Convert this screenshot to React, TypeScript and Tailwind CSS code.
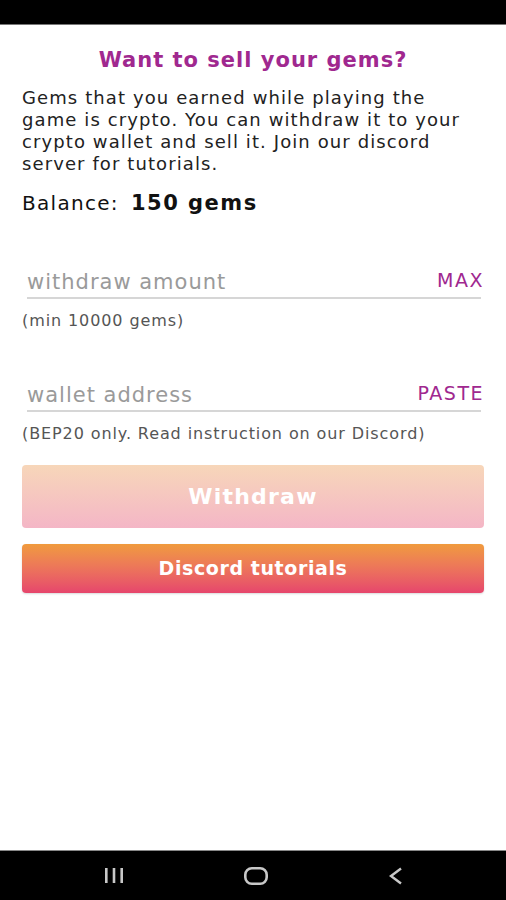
import React from 'react';

const Field = ({ placeholder, action, hint }: { placeholder: string; action: string; hint: string }) => (
    <div className="flex flex-col">
        <div className="ml-[5px] mr-[3px] flex items-center border-b-2 border-[#d6d6d6] pb-[2px]">
            <input
                className="min-w-0 flex-1 bg-transparent text-[21px] leading-[24px] tracking-[1px] text-[#222] placeholder-[#9a9a9a] outline-none"
                placeholder={placeholder}
            />
            <span className="-mr-[3px] mb-[4px] text-[19px] leading-[22px] tracking-[1.5px] text-[#a0288f]">{action}</span>
        </div>
        <p className="mt-[13px] text-[16px] leading-[18px] tracking-[0.9px] text-[#555]">{hint}</p>
    </div>
);

export default function App() {
    return (
        <div className="flex h-[900px] w-[506px] flex-col bg-white font-['DejaVu_Sans',sans-serif]">
            <div className="h-[25px] bg-black border-b border-[#777]" />

            <main className="flex flex-1 flex-col px-[22px]">
                <h1 className="mt-[21px] text-center text-[21px] font-bold leading-[28px] tracking-[1px] text-[#a0288f]">
                    Want to sell your gems?
                </h1>
                <p className="mt-[13px] w-[452px] text-[18px] leading-[22px] tracking-[1.1px] text-[#222]">
                    Gems that you earned while playing the game is crypto. You can withdraw it to your crypto wallet and sell it. Join our discord server for tutorials.
                </p>
                <div className="mt-[13px] flex items-baseline gap-[12px] text-[#111]">
                    <span className="text-[20px] tracking-[1.3px]">Balance:</span>
                    <span className="text-[21px] font-bold tracking-[1.5px]">150 gems</span>
                </div>

                <div className="mt-[49px]">
                    <Field placeholder="withdraw amount" action="MAX" hint="(min 10000 gems)" />
                </div>
                <div className="mt-[52px]">
                    <Field placeholder="wallet address" action="PASTE" hint="(BEP20 only. Read instruction on our Discord)" />
                </div>

                <button className="mt-[22px] h-[63px] rounded-[4px] bg-gradient-to-b from-[#f7d6b9] to-[#f4b6c6] text-[22px] font-bold tracking-[1.2px] text-white">
                    Withdraw
                </button>
                <button className="mt-[16px] h-[49px] rounded-[4px] bg-gradient-to-b from-[#f09a3c] to-[#e6456c] text-[19px] font-bold tracking-[0.6px] text-white shadow-[0_1px_2px_rgba(0,0,0,0.15)]">
                    Discord tutorials
                </button>
            </main>

            <nav className="flex h-[50px] items-center justify-center gap-[120px] bg-black border-t border-[#888]">
                <svg width="20" height="17" viewBox="0 0 20 17" className="text-[#c8c8c8]">
                    <rect x="1" y="1" width="2.6" height="15" fill="currentColor" />
                    <rect x="8.7" y="1" width="2.6" height="15" fill="currentColor" />
                    <rect x="16.4" y="1" width="2.6" height="15" fill="currentColor" />
                </svg>
                <svg width="24" height="18" viewBox="0 0 24 18" className="text-[#c8c8c8]">
                    <rect x="1.3" y="1.3" width="21.4" height="15.4" rx="6.5" fill="none" stroke="currentColor" strokeWidth="2.6" />
                </svg>
                <svg width="15" height="18" viewBox="0 0 15 18" className="text-[#c8c8c8]">
                    <path d="M13 1.5 L3 9 L13 16.5" fill="none" stroke="currentColor" strokeWidth="2.4" />
                </svg>
            </nav>
        </div>
    );
}
